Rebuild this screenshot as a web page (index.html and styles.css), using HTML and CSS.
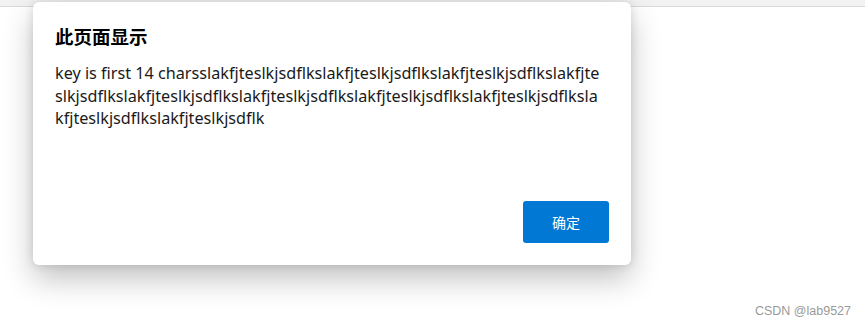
FILE: index.html
```html
<!DOCTYPE html>
<html lang="zh-CN">

<head>
  <meta charset="UTF-8">
  <meta name="viewport" content="width=device-width, initial-scale=1.0">
  <title>alert</title>
  <link rel="stylesheet" href="styles.css">
</head>

<body>
  <div class="topbar"></div>

  <!-- 浏览器 alert 弹窗 -->
  <div class="dialog">
    <h3 class="dialog-title">此页面显示</h3>
    <p class="dialog-msg">key is first 14 charsslakfjteslkjsdflkslakfjteslkjsdflkslakfjteslkjsdflkslakfjteslkjsdflkslakfjteslkjsdflkslakfjteslkjsdflkslakfjteslkjsdflkslakfjteslkjsdflkslakfjteslkjsdflkslakfjteslkjsdflk</p>
    <div class="dialog-foot">
      <button class="btn-ok">确定</button>
    </div>
  </div>

  <div class="mark">CSDN @lab9527</div>
</body>

</html>
```

FILE: styles.css
```css
body {
  margin: 0;
  height: 326px;
  background: #fff;
  font-family: "Noto Sans", "Noto Sans CJK SC", sans-serif;
  position: relative;
  overflow: hidden;
}

.topbar {
  height: 6px;
  background: #f2f2f2;
  border-bottom: 1px solid #dadada;
}

.dialog {
  position: absolute;
  left: 33px;
  top: 2px;
  width: 598px;
  height: 263px;
  box-sizing: border-box;
  padding: 21px 22px 22px 22px;
  background: #fff;
  border-radius: 6px;
  box-shadow: 0 14px 30px rgba(0, 0, 0, 0.24), 0 0 10px rgba(0, 0, 0, 0.12);
  display: flex;
  flex-direction: column;
}

.dialog-title {
  margin: 0;
  font-family: "Noto Sans CJK SC", sans-serif;
  font-size: 18.5px;
  font-weight: bold;
  line-height: 26px;
  color: #000;
}

.dialog-msg {
  width: 545px;
  margin: 13px 0 0;
  font-size: 16.2px;
  line-height: 22.5px;
  color: #1a1a1a;
  word-break: break-all;
}

.dialog-foot {
  margin-top: auto;
  display: flex;
  justify-content: flex-end;
}

.btn-ok {
  width: 86px;
  height: 42px;
  border: none;
  border-radius: 3px;
  background: #0078d4;
  color: #fff;
  font-family: "Noto Sans CJK SC", sans-serif;
  font-size: 14px;
}

.mark {
  position: absolute;
  right: 14px;
  bottom: 8px;
  font-family: "Liberation Sans", Arial, sans-serif;
  font-size: 12.5px;
  color: #9a9a9a;
}
```
